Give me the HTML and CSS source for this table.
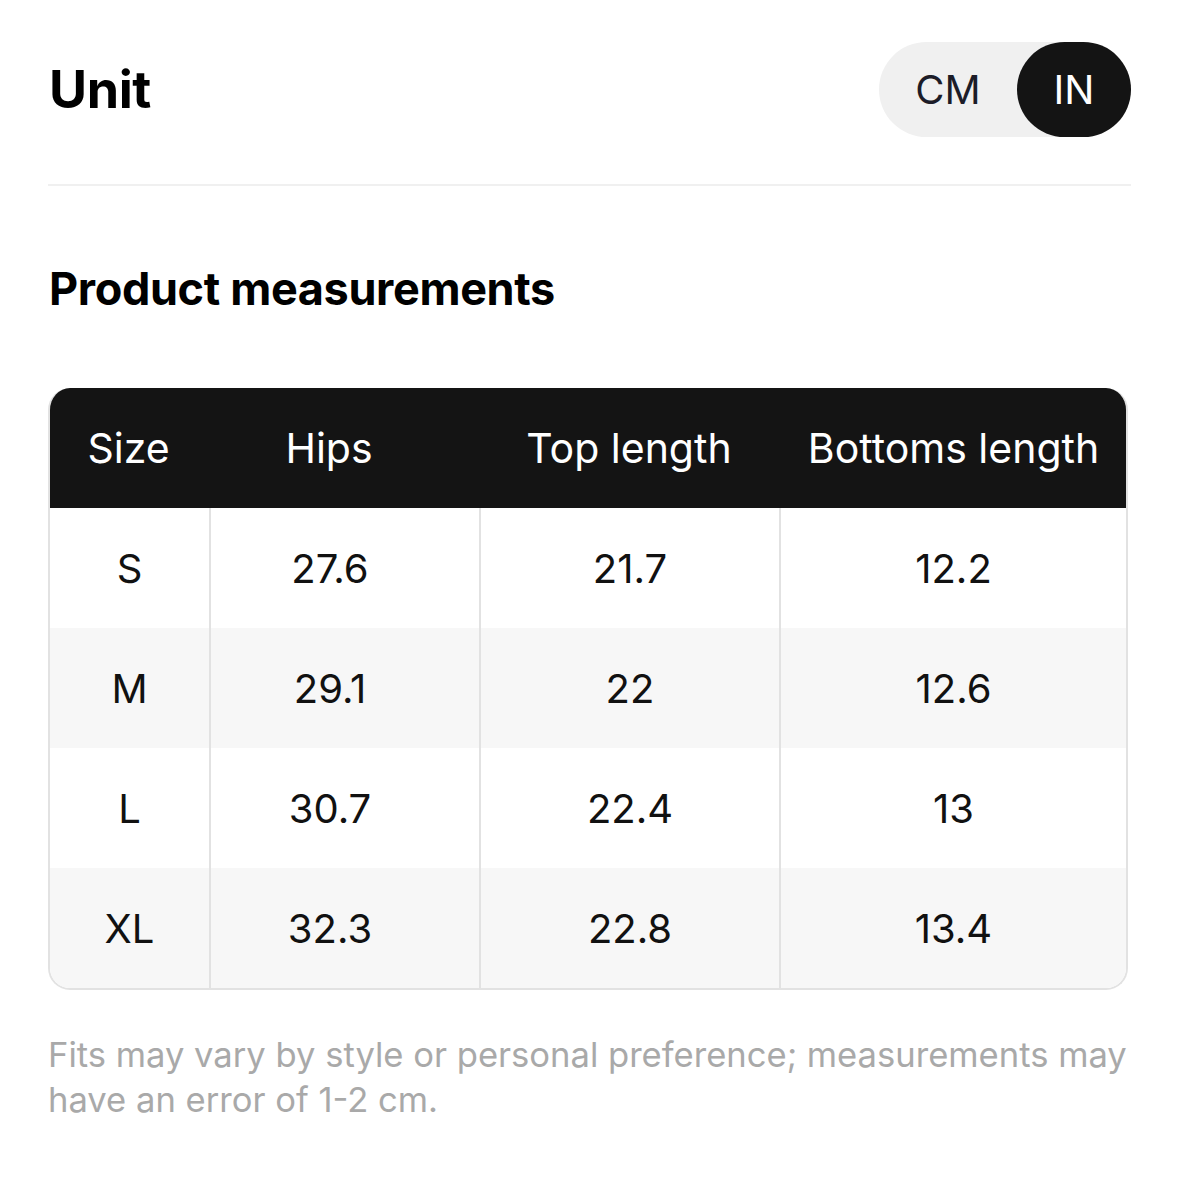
FILE: index.html
```html
<!DOCTYPE html>
<html>
<head>
<meta charset="utf-8">
<link rel="stylesheet" href="styles.css">
</head>
<body>
<div class="page">
  <div class="unit-row">
    <h1 class="unit-title">Unit</h1>
    <div class="toggle">
      <span class="opt">CM</span>
      <span class="opt active">IN</span>
    </div>
  </div>
  <div class="divider"></div>
  <h2 class="section-title">Product measurements</h2>
  <div class="table">
    <div class="row head">
      <div class="cell c1">Size</div>
      <div class="cell c2">Hips</div>
      <div class="cell c3">Top length</div>
      <div class="cell c4">Bottoms length</div>
    </div>
    <div class="row">
      <div class="cell c1">S</div>
      <div class="cell c2">27.6</div>
      <div class="cell c3">21.7</div>
      <div class="cell c4">12.2</div>
    </div>
    <div class="row alt">
      <div class="cell c1">M</div>
      <div class="cell c2">29.1</div>
      <div class="cell c3">22</div>
      <div class="cell c4">12.6</div>
    </div>
    <div class="row">
      <div class="cell c1">L</div>
      <div class="cell c2">30.7</div>
      <div class="cell c3">22.4</div>
      <div class="cell c4">13</div>
    </div>
    <div class="row alt last">
      <div class="cell c1">XL</div>
      <div class="cell c2">32.3</div>
      <div class="cell c3">22.8</div>
      <div class="cell c4">13.4</div>
    </div>
  </div>
  <p class="note">Fits may vary by style or personal preference; measurements may have an error of 1-2 cm.</p>
</div>
</body>
</html>
```

FILE: styles.css
```css
* { box-sizing: border-box; }
html, body { margin: 0; padding: 0; background: #fff; }
body { font-family: Inter, "Noto Sans", sans-serif; color: #111; }

.page {
  width: 1083px;
  margin-left: 48px;
  padding-top: 42px;
}

.unit-row {
  display: flex;
  align-items: center;
  justify-content: space-between;
  height: 95px;
}

.unit-title {
  margin: 0 0 0 1px;
  font-size: 52px;
  font-weight: 700;
  letter-spacing: -0.4px;
  color: #000;
}

.toggle {
  display: flex;
  align-items: center;
  background: #f0f0f0;
  border-radius: 48px;
  height: 95px;
  width: 252px;
}

.opt {
  flex: 1;
  height: 95px;
  display: flex;
  align-items: center;
  justify-content: center;
  font-size: 40px;
  color: #1c1c28;
  border-radius: 48px;
}

.opt.active {
  flex: 0 0 114px;
  background: #141414;
  color: #fff;
}

.divider {
  height: 2px;
  background: #f0f0f0;
  margin-top: 47px;
}

.section-title {
  margin: 78px 0 0 1px;
  font-size: 45px;
  font-weight: 700;
  letter-spacing: -0.35px;
  line-height: 50px;
  color: #000;
}

.table {
  margin-top: 74px;
  width: 1080px;
  border: 2px solid #e2e2e2;
  border-top: none;
  border-radius: 22px;
  overflow: hidden;
}

.row {
  display: flex;
  height: 120px;
  background: #fff;
}

.row.alt { background: #f7f7f7; }

.row.head {
  background: #141414;
  color: #fff;
  margin: 0 -2px;
}

.cell {
  display: flex;
  align-items: center;
  justify-content: center;
  font-size: 40px;
  color: #111;
  border-left: 2px solid #e2e2e2;
}

.head .cell { color: #fff; border-left: none; font-size: 41px; }

.c1 { width: 159px; border-left: none; }
.c2 { width: 270px; padding-right: 30px; }
.c3 { width: 300px; }
.c4 { flex: 1; }

.head .c1 { width: 161px; }

.note {
  margin: 42px 0 0 0;
  font-size: 34.6px;
  line-height: 45px;
  color: #a9a9a9;
  width: 1090px;
}
```
